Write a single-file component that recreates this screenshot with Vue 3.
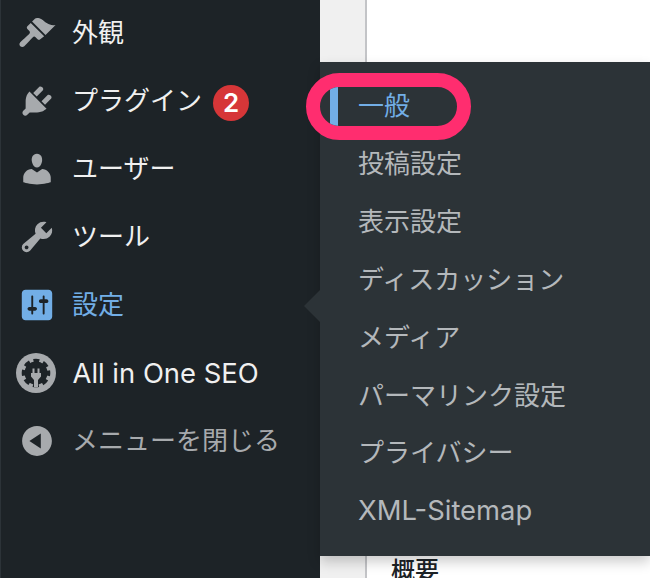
<script setup>
const menu = [
  { label: '外観', d: 'M14.48 11.06L7.41 3.99l1.5-1.5c.5-.56 2.3-.47 3.51.32 1.21.8 1.43 1.28 2.91 2.1 1.18.64 2.45 1.26 4.45.85zm-.71.71L6.7 4.7 4.93 6.47c-.39.39-.39 1.02 0 1.41l1.06 1.06c.39.39.39 1.03 0 1.42-.6.6-4.4 4.11-4.79 4.5-.59.58-.59 1.53 0 2.12.59.58 1.54.58 2.12 0 .39-.39 3.9-4.19 4.5-4.79.39-.39 1.03-.39 1.42 0l1.06 1.06c.39.39 1.02.39 1.41 0z' },
  { label: 'プラグイン', badge: 2, d: 'M13.11 4.36L9.87 7.6 8 5.73l3.24-3.24c.35-.34 1.05-.2 1.56.32.52.51.66 1.21.31 1.55zm-8 1.77l.91-1.12 9.01 9.01-1.19.84c-.71.71-2.63 1.16-3.82 1.16H6.14L4.9 17.26c-.59.59-1.54.59-2.12 0-.59-.58-.59-1.53 0-2.12l1.24-1.24v-3.88c0-1.13.4-3.19 1.09-3.89zm7.26 3.97l3.24-3.24c.34-.35 1.04-.21 1.55.31.52.51.66 1.21.31 1.55l-3.24 3.25z' },
  { label: 'ユーザー', d: 'M10 9.25c-2.27 0-2.73-3.44-2.73-3.44C7 4.02 7.82 2 9.97 2c2.16 0 2.98 2.02 2.71 3.81 0 0-.41 3.44-2.68 3.44zm0 2.57L12.72 10c2.39 0 4.52 2.33 4.52 4.53v2.49s-3.65 1.13-7.24 1.13c-3.65 0-7.24-1.13-7.24-1.13v-2.49c0-2.25 1.94-4.48 4.47-4.48z' },
  { label: 'ツール', d: 'M16.68 9.77c-1.34 1.34-3.3 1.67-4.95.99l-5.41 6.52c-.99.99-2.59.99-3.58 0s-.99-2.59 0-3.57l6.52-5.42c-.68-1.65-.35-3.61.99-4.95 1.28-1.28 3.12-1.62 4.72-1.06l-2.89 2.89 2.82 2.82 2.86-2.87c.53 1.58.18 3.39-1.08 4.65zM3.81 16.21c.4.39 1.04.39 1.43 0 .4-.4.4-1.04 0-1.43-.39-.4-1.03-.4-1.43 0-.39.39-.39 1.03 0 1.43z' },
  { label: '設定', active: true, d: 'M18 16V4c0-1.1-.9-2-2-2H4c-1.1 0-2 .9-2 2v12c0 1.1.9 2 2 2h12c1.1 0 2-.9 2-2zM8 11h1c.55 0 1 .45 1 1s-.45 1-1 1H8v1.5c0 .28-.22.5-.5.5s-.5-.22-.5-.5V13H6c-.55 0-1-.45-1-1s.45-1 1-1h1V5.5c0-.28.22-.5.5-.5s.5.22.5.5V11zm5-2h-1c-.55 0-1-.45-1-1s.45-1 1-1h1V5.5c0-.28.22-.5.5-.5s.5.22.5.5V7h1c.55 0 1 .45 1 1s-.45 1-1 1h-1v5.5c0 .28-.22.5-.5.5s-.5-.22-.5-.5V9z' },
  { label: 'All in One SEO', seo: true, latin: true },
  { label: 'メニューを閉じる', muted: true, d: 'M10 2.16c4.33 0 7.84 3.51 7.84 7.84s-3.51 7.84-7.84 7.84S2.16 14.33 2.16 10 5.71 2.16 10 2.16zm2 11.84V6l-6 4z' },
]
const submenu = ['一般', '投稿設定', '表示設定', 'ディスカッション', 'メディア', 'パーマリンク設定', 'プライバシー', 'XML-Sitemap']
</script>

<template>
  <div class="screen">
    <aside class="sidebar">
      <div
        v-for="item in menu"
        :key="item.label"
        class="item"
        :class="{ active: item.active, muted: item.muted }"
      >
        <span class="icon">
          <svg v-if="item.seo" class="seo" viewBox="0 0 40 40">
            <circle cx="20" cy="20" r="20" fill="#a7aaad" />
            <circle cx="20" cy="20" r="11.500" fill="#1d2327" />
            <circle class="teeth" cx="20" cy="20" r="12.300" />
            <path fill="#a7aaad" d="M16.500 15.500h2v4.500h3v-4.500h2v4.500h1.500v3.500l-3 3.500v7h-4v-7l-3-3.500v-3.500h1.500z" />
          </svg>
          <svg v-else viewBox="0 0 20 20"><path :d="item.d" /></svg>
        </span>
        <span class="label" :class="{ latin: item.latin }">{{ item.label }}</span>
        <span v-if="item.badge" class="badge">{{ item.badge }}</span>
      </div>
    </aside>

    <main class="content">
      <div class="panel">
        <span class="overview">概要</span>
      </div>
    </main>

    <nav class="flyout">
      <span class="caret"></span>
      <a
        v-for="(entry, i) in submenu"
        :key="entry"
        class="subitem"
        :class="{ current: i === 0, latin: entry === 'XML-Sitemap' }"
      >{{ entry }}</a>
    </nav>

    <div class="ring"><span class="bar"></span></div>
  </div>
</template>

<style scoped>
.screen {
  position: relative;
  display: flex;
  width: 650px;
  height: 578px;
  overflow: hidden;
  font-family: Inter, "Noto Sans CJK JP", sans-serif;
}
.sidebar {
  flex: 0 0 320px;
  box-sizing: border-box;
  padding: 0 0 0 1px;
  background: #1d2327;
  border-left: 1px solid #2c3338;
  display: flex;
  flex-direction: column;
}
.item {
  flex: 0 0 68px;
  display: flex;
  align-items: center;
  color: #f0f0f0;
  font-size: 26px;
  position: relative;
  top: -1px;
}
.icon {
  flex: 0 0 38px;
  height: 38px;
  margin: 0 16.500px 0 15.500px;
  display: flex;
  align-items: center;
  justify-content: center;
}
.icon svg {
  width: 38px;
  height: 38px;
  fill: #a7aaad;
  display: block;
}
.icon svg.seo {
  flex: none;
  width: 40px;
  height: 40px;
  margin-left: -1.500px;
}
.teeth {
  fill: none;
  stroke: #1d2327;
  stroke-width: 4;
  stroke-dasharray: 5.800 3.860;
  stroke-dashoffset: 2.900;
}
.label {
  white-space: nowrap;
  line-height: 1.2;
}
.latin {
  font-size: 27.400px;
}
.active .label { color: #72aee6; }
.active .icon svg { fill: #72aee6; }
.muted .label { color: #a7aaad; }
.badge {
  width: 36px;
  height: 36px;
  margin: 4px 0 0 11px;
  border-radius: 50%;
  background: #d63638;
  color: #fff;
  font-size: 26px;
  font-weight: 600;
  line-height: 36px;
  text-align: center;
}
.content {
  flex: 1;
  background: #f0f0f0;
  padding-left: 45px;
}
.panel {
  height: 100%;
  background: #fff;
  border-left: 2px solid #c3c4c7;
  box-sizing: border-box;
  display: flex;
  align-items: flex-end;
  padding-left: 24px;
}
.overview {
  font-size: 24px;
  font-weight: 500;
  line-height: 24px;
  color: #1d2327;
  margin-bottom: -5px;
}
.flyout {
  position: absolute;
  left: 320px;
  top: 62px;
  width: 330px;
  height: 494px;
  box-sizing: border-box;
  background: #2c3337;
  padding: 15px 0 0 38px;
  box-shadow: 0 6px 12px rgba(0, 0, 0, 0.2);
  display: flex;
  flex-direction: column;
}
.caret {
  position: absolute;
  left: -16px;
  top: 228px;
  border-top: 16px solid transparent;
  border-bottom: 16px solid transparent;
  border-right: 16px solid #2c3337;
}
.subitem {
  flex: 0 0 57.900px;
  line-height: 57.900px;
  font-size: 26px;
  color: #b4b8bb;
  white-space: nowrap;
}
.subitem.latin { font-size: 27.400px; }
.subitem.current { color: #72aee6; }
.ring {
  position: absolute;
  left: 306px;
  top: 73px;
  width: 165px;
  height: 67px;
  box-sizing: border-box;
  border: 14px solid #ff2d6f;
  border-radius: 34px;
  overflow: hidden;
}
.bar {
  position: absolute;
  left: 10px;
  top: 0;
  bottom: 0;
  width: 8px;
  background: #72aee6;
}
</style>
